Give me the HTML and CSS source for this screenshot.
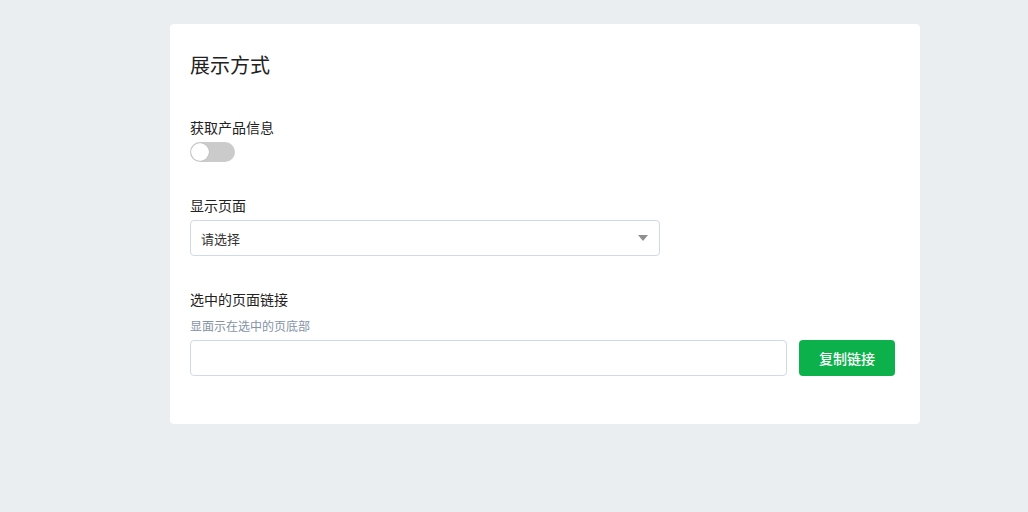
FILE: index.html
```html
<!DOCTYPE html>
<html lang="zh-CN">
<head>
    <meta charset="UTF-8">
    <title>展示方式</title>
    <link rel="stylesheet" href="styles.css">
</head>
<body>
    <div class="card">
        <h2 class="card-title">展示方式</h2>

        <div class="field field-first">
            <div class="field-label">获取产品信息</div>
            <span class="switch">
                <span class="switch-knob"></span>
            </span>
        </div>

        <div class="field">
            <div class="field-label">显示页面</div>
            <div class="select">
                <span class="select-text">请选择</span>
                <span class="select-arrow"></span>
            </div>
        </div>

        <div class="field">
            <div class="field-label">选中的页面链接</div>
            <div class="field-hint">显面示在选中的页底部</div>
            <div class="link-row">
                <input class="link-input" type="text">
                <button class="btn-copy">复制链接</button>
            </div>
        </div>
    </div>
</body>
</html>
```

FILE: styles.css
```css
body {
    margin: 0;
    padding: 24px 0 0 170px;
    background-color: #ebeef1;
    font-family: "Noto Sans CJK SC", "Liberation Sans", sans-serif;
    color: #222;
}

.card {
    width: 710px;
    height: 352px;
    padding: 27px 20px 21px;
    background-color: #fff;
    border-radius: 4px;
}

.card-title {
    margin: 0;
    font-size: 20px;
    font-weight: normal;
    line-height: 28px;
    color: #222;
}

.field {
    margin-top: 33px;
}

.field-first {
    margin-top: 38px;
}

.field-label {
    font-size: 14px;
    line-height: 20px;
    height: 20px;
    margin-bottom: 5px;
}

.field-hint {
    font-size: 12px;
    line-height: 16px;
    height: 16px;
    color: #8492a6;
    margin-top: 9px;
    margin-bottom: 6px;
}

.switch {
    display: block;
    position: relative;
    width: 45px;
    height: 20px;
    border-radius: 10px;
    background-color: #cbcbcb;
}

.switch-knob {
    position: absolute;
    left: 1px;
    top: 1px;
    width: 18px;
    height: 18px;
    border-radius: 50%;
    background-color: #fff;
    box-shadow: 0 0 1px rgba(0, 0, 0, 0.3);
}

.select {
    box-sizing: border-box;
    width: 470px;
    height: 36px;
    border: 1px solid #cfdae6;
    border-radius: 4px;
    display: flex;
    align-items: center;
    justify-content: space-between;
    padding: 0 10px;
}

.select-text {
    font-size: 13px;
    color: #333;
}

.select-arrow {
    width: 0;
    height: 0;
    border-left: 5px solid transparent;
    border-right: 5px solid transparent;
    border-top: 6px solid #8f8f8f;
    margin-right: 1px;
}

.link-row {
    display: flex;
    gap: 12px;
}

.link-input {
    box-sizing: border-box;
    width: 597px;
    height: 36px;
    margin: 0;
    border: 1px solid #cfdae6;
    border-radius: 4px;
    outline: none;
}

.btn-copy {
    width: 96px;
    height: 36px;
    border: none;
    border-radius: 4px;
    background-color: #0db14b;
    color: #fff;
    font-family: inherit;
    font-size: 14px;
    font-weight: 500;
    cursor: pointer;
}
```
